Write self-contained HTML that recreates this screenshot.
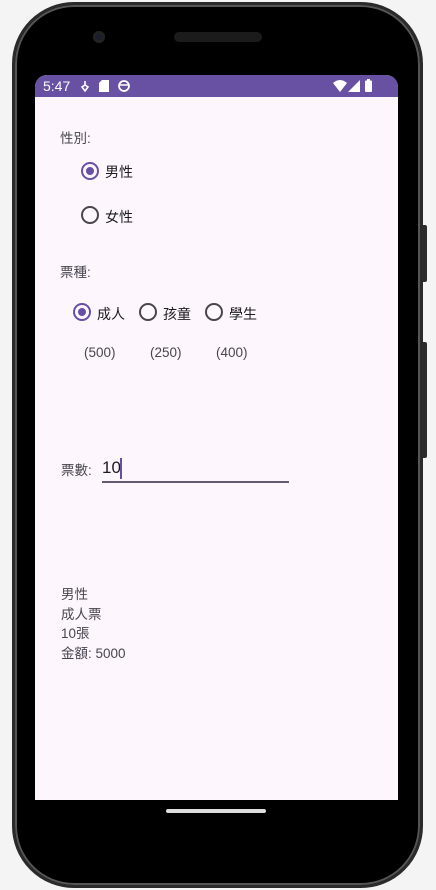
<!DOCTYPE html>
<html><head><meta charset="utf-8"><style>
*{margin:0;padding:0;box-sizing:border-box}
body{width:436px;height:890px;background:#f4f4f4;position:relative;overflow:hidden;font-family:"Liberation Sans","Noto Sans CJK TC",sans-serif}
.phone{position:absolute;left:12px;top:2px;width:411px;height:886px;background:#000;border-radius:62px;border:3px solid #2a2a2a;box-shadow:inset 0 0 0 2px #555}
.btn{position:absolute;left:422px;width:5px;background:#2b2b2b;border-radius:0 2px 2px 0}
.screen{position:absolute;left:35px;top:75px;width:363px;height:725px;background:#fdf7fd;border-radius:12px 12px 0 0;overflow:hidden}
.sb{height:22px;background:#6851a3;color:#fff;font-size:14px;position:relative}
.t{position:absolute;color:#49454f;font-size:13.5px}
.r{position:absolute;width:18px;height:18px;border:2px solid #49454f;border-radius:50%}
.r.on{border-color:#6750a4}
.r.on::after{content:"";position:absolute;left:3px;top:3px;width:8px;height:8px;border-radius:50%;background:#6750a4}
.l{position:absolute;color:#1d1b20;font-size:14px}
</style></head><body>
<div class="phone"></div>
<div class="btn" style="top:225px;height:57px"></div>
<div class="btn" style="top:342px;height:116px"></div>
<div style="position:absolute;left:93px;top:31px;width:12px;height:12px;border-radius:50%;background:#1a1d2e;box-shadow:inset 0 0 0 3px #222"></div>
<div style="position:absolute;left:174px;top:32px;width:88px;height:10px;border-radius:5px;background:#1b1b1b"></div>
<div class="screen">
 <div class="sb"><span style="position:absolute;left:8px;top:3px">5:47</span>
 <svg style="position:absolute;left:45px;top:5px" width="10" height="12" viewBox="0 0 10 12"><path d="M5 1v4M2 7l3-2 3 2-3 4z" stroke="#fff" stroke-width="1.6" fill="none"/></svg>
 <svg style="position:absolute;left:64px;top:5px" width="10" height="12"><path d="M3 0h7v12H0V3z" fill="#fff"/></svg>
 <svg style="position:absolute;left:83px;top:5px" width="12" height="12"><circle cx="6" cy="6" r="5" stroke="#fff" stroke-width="1.8" fill="none"/><path d="M2 5h8" stroke="#fff" stroke-width="1.5"/></svg>
 <svg style="position:absolute;left:298px;top:5px" width="14" height="12"><path d="M0 3Q7-3 14 3L7 12z" fill="#fff"/></svg>
 <svg style="position:absolute;left:313px;top:5px" width="12" height="12"><path d="M12 0V12H0z" fill="#fff"/></svg>
 <svg style="position:absolute;left:330px;top:4px" width="7" height="13"><rect x="0" y="1.5" width="7" height="11.5" rx="1" fill="#fff"/><rect x="2" y="0" width="3" height="2" fill="#fff"/></svg>
 </div>
 <div class="t" style="left:25px;top:52px">性別:</div>
 <div class="r on" style="left:46px;top:87px"></div><div class="l" style="left:70px;top:87px">男性</div>
 <div class="r" style="left:46px;top:131px"></div><div class="l" style="left:70px;top:132px">女性</div>
 <div class="t" style="left:25px;top:186px">票種:</div>
 <div class="r on" style="left:38px;top:228px"></div><div class="l" style="left:62px;top:229px">成人</div>
 <div class="r" style="left:104px;top:228px"></div><div class="l" style="left:128px;top:229px">孩童</div>
 <div class="r" style="left:170px;top:228px"></div><div class="l" style="left:194px;top:229px">學生</div>
 <div class="t" style="left:49px;top:270px">(500)</div>
 <div class="t" style="left:115px;top:270px">(250)</div>
 <div class="t" style="left:181px;top:270px">(400)</div>
 <div class="t" style="left:26px;top:384px">票數:</div>
 <div class="l" style="left:67px;top:383px;font-size:17px">10</div>
 <div style="position:absolute;left:85px;top:383px;width:2px;height:21px;background:#6750a4"></div>
 <div style="position:absolute;left:67px;top:406px;width:187px;height:2px;background:#625b71"></div>
 <div class="t" style="left:26px;top:510px;line-height:19.5px">男性<br>成人票<br>10張<br>金額: 5000</div>
</div>
<div style="position:absolute;left:166px;top:809px;width:100px;height:4px;border-radius:2px;background:#ddd"></div>
</body></html>
